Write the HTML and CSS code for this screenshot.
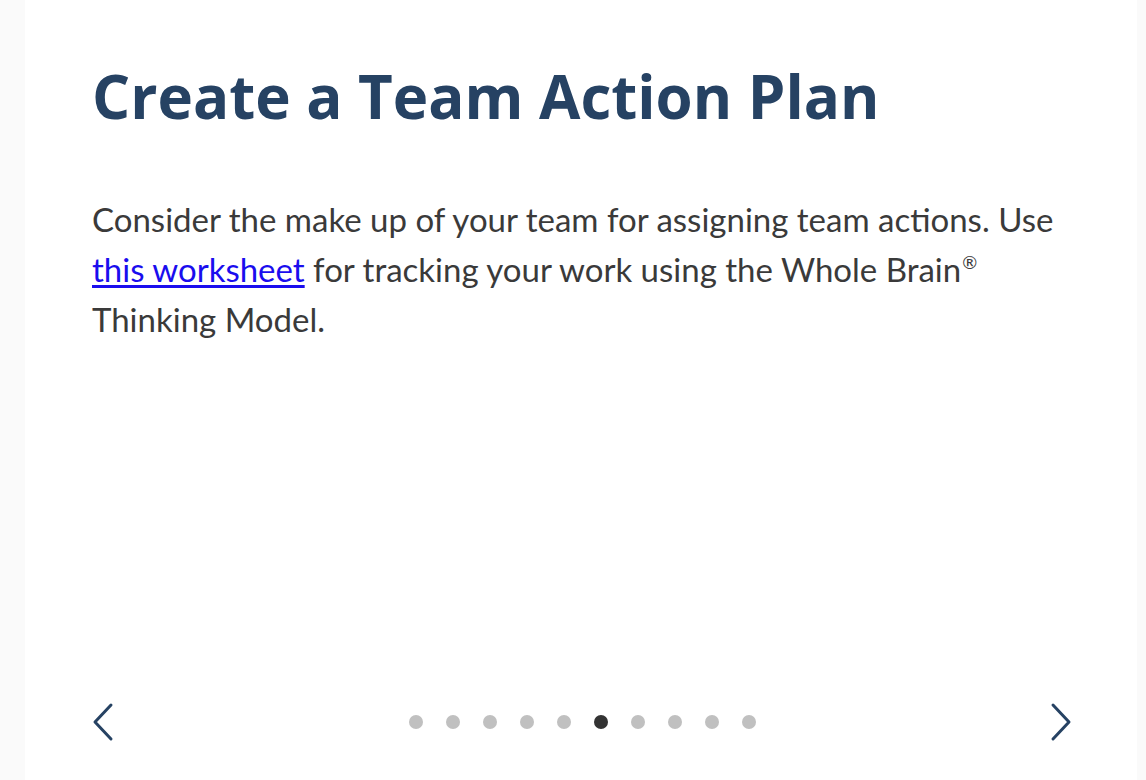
FILE: index.html
```html
<!DOCTYPE html>
<html>
<head>
<meta charset="utf-8">
<link rel="stylesheet" href="styles.css">
</head>
<body>
<div class="page">
  <div class="card">
    <h1 class="title">Create a Team Action Plan</h1>
    <p class="body">Consider the make up of your team for assigning team actions. Use <a href="#" class="link">this worksheet</a> for tracking your work using the Whole Brain<sup class="reg">®</sup> Thinking Model.</p>
    <div class="nav">
      <button class="arrow" aria-label="Previous">
        <svg width="24" height="40" viewBox="0 0 24 40"><path d="M19 3 L3 20 L19 37" fill="none" stroke="#264263" stroke-width="3" stroke-linecap="round" stroke-linejoin="round"/></svg>
      </button>
      <div class="dots">
        <span class="dot"></span><span class="dot"></span><span class="dot"></span><span class="dot"></span><span class="dot"></span><span class="dot active"></span><span class="dot"></span><span class="dot"></span><span class="dot"></span><span class="dot"></span>
      </div>
      <button class="arrow arrow-next" aria-label="Next">
        <svg width="24" height="40" viewBox="0 0 24 40"><path d="M4 3 L20 20 L4 37" fill="none" stroke="#264263" stroke-width="3" stroke-linecap="round" stroke-linejoin="round"/></svg>
      </button>
    </div>
  </div>
</div>
</body>
</html>
```
FILE: styles.css
```css
html, body {
  margin: 0;
  padding: 0;
  background: #fafafa;
}
.page {
  height: 780px;
  padding: 0 9px 0 25px;
  display: flex;
}
.card {
  flex: 1;
  background: #ffffff;
  padding: 0 67px;
  display: flex;
  flex-direction: column;
}
.title {
  font-family: "Open Sans", Lato, sans-serif;
  font-weight: 700;
  font-size: 60px;
  line-height: 72px;
  letter-spacing: 0;
  color: #264263;
  margin: 60px 0 0 0;
}
.body {
  font-family: Lato, "Liberation Sans", sans-serif;
  font-size: 33px;
  line-height: 50px;
  color: #3a3a3a;
  margin: 62px 0 0 0;
  max-width: 975px;
}
.link {
  color: #1a0dee;
  text-decoration: underline;
  text-underline-offset: 3px;
}
.reg {
  font-size: 18px;
  line-height: 0;
  vertical-align: 13px;
  margin-left: 1px;
}
.nav {
  margin-top: auto;
  margin-bottom: 38px;
  display: flex;
  align-items: center;
}
.arrow {
  background: none;
  border: 0;
  padding: 0;
  width: 24px;
  height: 40px;
  display: flex;
}
.arrow-next {
  margin-left: auto;
  margin-right: -3px;
}
.dots {
  display: flex;
  gap: 23px;
  margin-left: 293px;
}
.dot {
  width: 14px;
  height: 14px;
  border-radius: 50%;
  background: #c0c0c0;
}
.dot.active {
  background: #333333;
}
```
